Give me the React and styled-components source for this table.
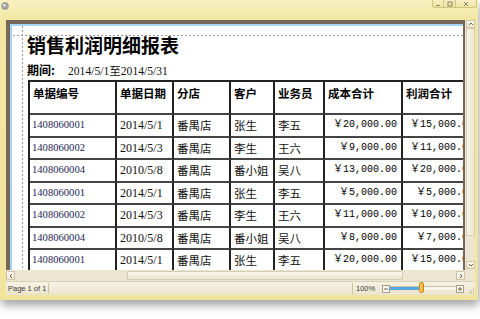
import React from 'react';
import styled, { createGlobalStyle } from 'styled-components';

const GlobalStyle = createGlobalStyle`
  html, body { margin: 0; padding: 0; background: #ffffff; }
  body { font-family: "Liberation Sans", Arial, sans-serif; }
  #root { width: 480px; height: 319px; overflow: hidden; }
`;

const Window = styled.div`
  width: 478px;
  height: 300px;
  box-sizing: border-box;
  padding-bottom: 5px;
  display: flex;
  flex-direction: column;
  background: linear-gradient(#f8f1c0 0px, #f1e6a3 20px, #f0e49d 100%);
  box-shadow: 1px 5px 9px rgba(0, 0, 0, 0.38);
`;

const TitleBar = styled.div`
  height: 20px;
  flex: none;
  display: flex;
  justify-content: space-between;
  align-items: flex-start;
  padding: 0 1px 0 1px;
`;

const AppIcon = styled.svg`
  width: 8px;
  height: 8px;
  margin-top: 2px;
`;

const Controls = styled.div`
  display: flex;
  height: 8px;
`;

const CtrlButton = styled.div`
  width: ${p => p.$w}px;
  height: 8px;
  box-sizing: border-box;
  border: 1px solid #d2c47e;
  border-top: none;
  border-left-width: ${p => (p.$first ? 1 : 0)}px;
  border-radius: ${p => (p.$first ? '0 0 0 3px' : p.$last ? '0 0 3px 0' : '0')};
  background: linear-gradient(#f7efc3, #efe3a4);
  display: flex;
  align-items: center;
  justify-content: center;
`;

const Client = styled.div`
  flex: 1;
  min-height: 0;
  margin: 0 3px 0 6px;
  display: grid;
  grid-template-columns: 1fr 10px;
  grid-template-rows: 250px 11px 14px;
`;

const Viewport = styled.div`
  background: #766758;
  padding: 4px 2px 0 4px;
  box-sizing: border-box;
  display: flex;
  overflow: hidden;
`;

const Page = styled.div`
  flex: 1;
  position: relative;
  overflow: hidden;
  background: #ffffff;
  border-top: 2px solid #a4d6f6;
  border-left: 2px solid #a4d6f6;
  padding: 8px 0 0 15px;
`;

const GuideV = styled.div`
  position: absolute;
  left: 10px;
  top: 0;
  bottom: 0;
  width: 1px;
  background: repeating-linear-gradient(to bottom, #9c9c9c 0 2px, transparent 2px 4px);
`;

const GuideH = styled.div`
  position: absolute;
  top: 9px;
  left: 1px;
  right: 0;
  height: 1px;
  background: repeating-linear-gradient(to right, #9c9c9c 0 2px, transparent 2px 4px);
`;

const ReportTitle = styled.h1`
  margin: 0;
  font-family: "Noto Sans CJK SC", sans-serif;
  font-weight: 700;
  font-size: 19px;
  line-height: 22px;
  color: #000;
`;

const PeriodRow = styled.div`
  margin-top: 6px;
  display: flex;
  align-items: baseline;
  height: 16px;
  line-height: 16px;
`;

const PeriodLabel = styled.span`
  width: 41px;
  font-family: "Noto Sans CJK SC", sans-serif;
  font-weight: 700;
  font-size: 12px;
  color: #000;
`;

const PeriodValue = styled.span`
  font-family: "Liberation Serif", "Noto Sans CJK SC", serif;
  font-size: 11.6px;
  color: #111;
`;

const Table = styled.table`
  margin: 2px 0 0 1px;
  width: 452px;
  table-layout: fixed;
  border-collapse: separate;
  border-spacing: 0;
  border-top: 2px solid #222;
  border-left: 2px solid #222;
`;

const Th = styled.th`
  box-sizing: border-box;
  width: ${p => p.$w}px;
  height: 33px;
  padding: 3px 3px 0 3px;
  vertical-align: top;
  text-align: left;
  border-right: 2px solid #222;
  border-bottom: 2px solid #444;
  font-family: "Noto Sans CJK SC", sans-serif;
  font-weight: 700;
  font-size: 11.5px;
  line-height: 16px;
  color: #000;
  white-space: nowrap;
`;

const cellFont = {
  id: `font-family: "Liberation Serif", serif; font-size: 10.6px; color: #1c2654;`,
  date: `font-family: "Liberation Serif", serif; font-size: 12px; color: #111;`,
  text: `font-family: "Noto Sans CJK SC", sans-serif; font-size: 11.5px; color: #111;`,
  money: `font-family: "Liberation Mono", "Noto Sans CJK SC", monospace; font-size: 10px; color: #000;`,
};

const Td = styled.td`
  box-sizing: border-box;
  height: 22.5px;
  padding: 0 ${p => (p.$kind === 'money' ? '4px' : '3px')} 0 ${p => (p.$kind === 'id' ? '2px' : '3px')};
  text-align: ${p => (p.$kind === 'money' ? 'right' : 'left')};
  vertical-align: middle;
  border-right: 2px solid #222;
  border-bottom: 2px solid #444;
  white-space: nowrap;
  overflow: hidden;
  line-height: 14px;
  ${p => cellFont[p.$kind]}
`;

const VScroll = styled.div`
  display: flex;
  flex-direction: column;
  background: #ebe5d1;
  padding: 0 0 1px 1px;
  box-sizing: border-box;
`;

const HScroll = styled.div`
  display: flex;
  background: #ebe5d1;
  padding: 1px 0 1px 0;
  box-sizing: border-box;
`;

const ArrowBtn = styled.div`
  flex: none;
  width: ${p => (p.$vertical ? 'auto' : '9px')};
  height: ${p => (p.$vertical ? '8px' : 'auto')};
  box-sizing: border-box;
  border: 1px solid #d0c7aa;
  background: linear-gradient(#faf7ee, #eee7d3);
  display: flex;
  align-items: center;
  justify-content: center;
`;

const Track = styled.div`
  flex: 1;
  display: flex;
  flex-direction: ${p => (p.$vertical ? 'column' : 'row')};
`;

const Thumb = styled.div`
  flex: none;
  box-sizing: border-box;
  ${p => (p.$vertical ? `margin-top: ${p.$offset}px; height: ${p.$size}px;` : `margin-left: ${p.$offset}px; width: ${p.$size}px;`)}
  border: 1px solid #d6ceb3;
  background: ${p => (p.$vertical ? 'linear-gradient(to right, #f8f5ea, #ede6d0)' : 'linear-gradient(#f8f5ea, #ede6d0)')};
  display: flex;
  align-items: center;
  justify-content: center;
`;

const Grip = styled.div`
  width: ${p => (p.$vertical ? '4px' : '1px')};
  height: ${p => (p.$vertical ? '1px' : '4px')};
  border: ${p => (p.$vertical ? '1px 0' : '0 1px')} solid #b9b09a;
`;

const Corner = styled.div`
  background: #ebe5d1;
`;

const StatusBar = styled.div`
  grid-column: 1 / -1;
  display: flex;
  align-items: center;
  background: linear-gradient(#f6f2e4, #ebe4cc);
  border-top: 1px solid #d9d1b6;
  box-sizing: border-box;
  font-family: "Liberation Sans", Arial, sans-serif;
  font-size: 7.5px;
  color: #3a3a3a;
`;

const PageInfo = styled.div`
  width: 43px;
  box-sizing: border-box;
  padding-left: 2px;
  border-right: 1px solid #cdc4a6;
  height: 11px;
  line-height: 11px;
`;

const Spacer = styled.div`
  flex: 1;
`;

const ZoomBox = styled.div`
  display: flex;
  align-items: center;
  height: 11px;
  border-left: 1px solid #cdc4a6;
  padding-left: 3px;
`;

const ZoomPct = styled.span`
  width: 26px;
  line-height: 11px;
`;

const ZoomBtn = styled.div`
  width: 8px;
  height: 8px;
  box-sizing: border-box;
  border: 1px solid #a89f86;
  background: #f8f5ec;
  display: flex;
  align-items: center;
  justify-content: center;
`;

const SliderTrack = styled.div`
  position: relative;
  width: 66px;
  height: 3px;
  background: linear-gradient(to right, #58a6e4 0, #58a6e4 ${p => p.$pos}px, #f8f6ee ${p => p.$pos}px);
  border-top: 1px solid #c9c0a4;
  border-bottom: 1px solid #e8e2cf;
  box-sizing: content-box;
`;

const SliderThumb = styled.div`
  position: absolute;
  top: -5px;
  left: ${p => p.$left}px;
  width: 5px;
  height: 11px;
  box-sizing: border-box;
  border: 1px solid #c98f1f;
  border-radius: 2px;
  background: linear-gradient(to right, #fbd36a, #f0a823);
`;

const ResizeGrip = styled.svg`
  width: 7px;
  height: 8px;
  margin-left: 4px;
  margin-top: 3px;
`;

const columns = [
  { title: '单据编号', w: 87 },
  { title: '单据日期', w: 57 },
  { title: '分店', w: 57 },
  { title: '客户', w: 44 },
  { title: '业务员', w: 50 },
  { title: '成本合计', w: 78 },
  { title: '利润合计', w: 77 },
];

const kinds = ['id', 'date', 'text', 'text', 'text', 'money', 'money'];

const rows = [
  ['1408060001', '2014/5/1', '番禺店', '张生', '李五', '20,000.00', '15,000.00'],
  ['1408060002', '2014/5/3', '番禺店', '李生', '王六', '9,000.00', '11,000.00'],
  ['1408060004', '2010/5/8', '番禺店', '番小姐', '吴八', '13,000.00', '20,000.00'],
  ['1408060001', '2014/5/1', '番禺店', '张生', '李五', '5,000.00', '5,000.00'],
  ['1408060002', '2014/5/3', '番禺店', '李生', '王六', '11,000.00', '10,000.00'],
  ['1408060004', '2010/5/8', '番禺店', '番小姐', '吴八', '8,000.00', '7,000.00'],
  ['1408060001', '2014/5/1', '番禺店', '张生', '李五', '20,000.00', '15,000.00'],
];

const Chevron = ({ dir }) => {
  const pts = {
    up: '1,4 3,2 5,4',
    down: '1,2 3,4 5,2',
    left: '4,1 2,3 4,5',
    right: '2,1 4,3 2,5',
  }[dir];
  return (
    <svg width="6" height="6" viewBox="0 0 6 6">
      <polyline points={pts} fill="none" stroke="#6c6656" strokeWidth="1" />
    </svg>
  );
};

export default function App() {
  return (
    <>
      <GlobalStyle />
      <Window>
        <TitleBar>
          <AppIcon viewBox="0 0 8 8">
            <circle cx="4" cy="4" r="3.4" fill="#a9a9a9" stroke="#7d7d7d" strokeWidth="0.6" />
            <circle cx="3.2" cy="3" r="1.3" fill="#e6e6e6" />
          </AppIcon>
          <Controls>
            <CtrlButton $w={12} $first>
              <svg width="6" height="6" viewBox="0 0 6 6"><line x1="1" y1="4.5" x2="5" y2="4.5" stroke="#8a8266" strokeWidth="1" /></svg>
            </CtrlButton>
            <CtrlButton $w={12}>
              <svg width="6" height="6" viewBox="0 0 6 6"><rect x="1" y="1" width="4" height="4" fill="none" stroke="#8a8266" strokeWidth="1" /></svg>
            </CtrlButton>
            <CtrlButton $w={21} $last>
              <svg width="6" height="6" viewBox="0 0 6 6"><path d="M1 1 L5 5 M5 1 L1 5" stroke="#8a8266" strokeWidth="1" /></svg>
            </CtrlButton>
          </Controls>
        </TitleBar>
        <Client>
          <Viewport>
            <Page>
              <GuideV />
              <GuideH />
              <ReportTitle>销售利润明细报表</ReportTitle>
              <PeriodRow>
                <PeriodLabel>期间:</PeriodLabel>
                <PeriodValue>2014/5/1至2014/5/31</PeriodValue>
              </PeriodRow>
              <Table>
                <thead>
                  <tr>
                    {columns.map(c => (
                      <Th key={c.title} $w={c.w}>{c.title}</Th>
                    ))}
                  </tr>
                </thead>
                <tbody>
                  {rows.map((r, i) => (
                    <tr key={i}>
                      {r.map((v, j) => (
                        <Td key={j} $kind={kinds[j]}>
                          {kinds[j] === 'money' ? `￥${v}` : v}
                        </Td>
                      ))}
                    </tr>
                  ))}
                </tbody>
              </Table>
            </Page>
          </Viewport>
          <VScroll>
            <ArrowBtn $vertical><Chevron dir="up" /></ArrowBtn>
            <Track $vertical>
              <Thumb $vertical $offset={0} $size={208}><Grip $vertical /></Thumb>
            </Track>
            <ArrowBtn $vertical><Chevron dir="down" /></ArrowBtn>
          </VScroll>
          <HScroll>
            <ArrowBtn><Chevron dir="left" /></ArrowBtn>
            <Track>
              <Thumb $offset={112} $size={276}><Grip /></Thumb>
            </Track>
            <ArrowBtn><Chevron dir="right" /></ArrowBtn>
          </HScroll>
          <Corner />
          <StatusBar>
            <PageInfo>Page 1 of 1</PageInfo>
            <Spacer />
            <ZoomBox>
              <ZoomPct>100%</ZoomPct>
              <ZoomBtn>
                <svg width="4" height="4" viewBox="0 0 4 4"><line x1="0" y1="2" x2="4" y2="2" stroke="#6c6656" strokeWidth="1" /></svg>
              </ZoomBtn>
              <SliderTrack $pos={31}>
                <SliderThumb $left={29} />
              </SliderTrack>
              <ZoomBtn>
                <svg width="4" height="4" viewBox="0 0 4 4"><path d="M0 2 H4 M2 0 V4" stroke="#6c6656" strokeWidth="1" /></svg>
              </ZoomBtn>
              <ResizeGrip viewBox="0 0 7 8">
                <rect x="5" y="2" width="1" height="1" fill="#b1a890" />
                <rect x="3" y="4" width="1" height="1" fill="#b1a890" />
                <rect x="5" y="4" width="1" height="1" fill="#b1a890" />
                <rect x="1" y="6" width="1" height="1" fill="#b1a890" />
                <rect x="3" y="6" width="1" height="1" fill="#b1a890" />
                <rect x="5" y="6" width="1" height="1" fill="#b1a890" />
              </ResizeGrip>
            </ZoomBox>
          </StatusBar>
        </Client>
      </Window>
    </>
  );
}
